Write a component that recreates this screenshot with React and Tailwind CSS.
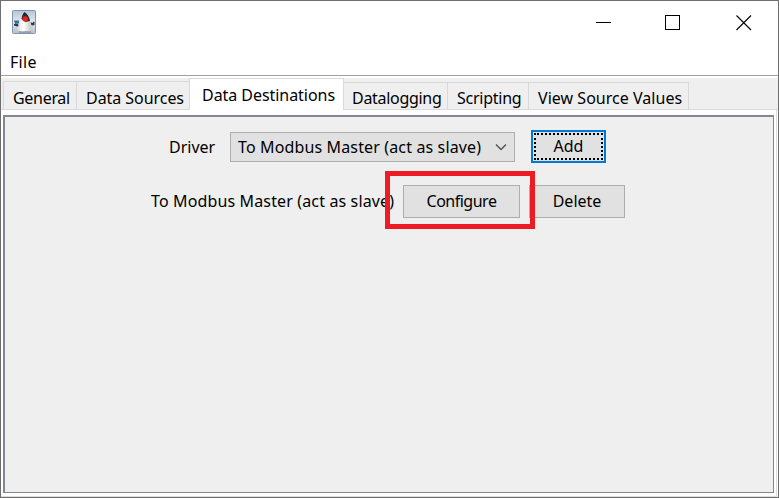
const tabs = [
  { label: 'General', box: 'w-[73px] h-7 border-l pl-[9px] pt-[6px]', text: 'tracking-[-0.3px]' },
  { label: 'Data Sources', box: 'w-[113px] h-7 border-l pl-[9px] pt-[6px]', text: 'tracking-[-0.05px]' },
  { label: 'Data Destinations', box: 'w-[155px] h-8 -mb-px border-x bg-white pl-[12px] pt-[6px]', text: 'tracking-[-0.05px]' },
  { label: 'Datalogging', box: 'w-[103px] h-[27px] pl-[8px] pt-[5px]', text: 'tracking-[-0.3px]' },
  { label: 'Scripting', box: 'w-[81px] h-[27px] border-l pl-[9px] pt-[5px]', text: 'tracking-[-0.25px]' },
  { label: 'View Source Values', box: 'w-[161px] h-[27px] border-x pl-[9px] pt-[5px]', text: 'tracking-[0.03px]' },
];

function DukeIcon() {
  return (
    <svg width="24" height="24" viewBox="0 0 24 24">
      <defs>
        <linearGradient id="sky" x1="0" y1="0" x2="0" y2="1">
          <stop offset="0" stopColor="#b4c4d6" />
          <stop offset="0.5" stopColor="#e3e9ef" />
          <stop offset="1" stopColor="#b4bfcc" />
        </linearGradient>
        <linearGradient id="belly" x1="0" y1="0" x2="1" y2="0">
          <stop offset="0" stopColor="#dedede" />
          <stop offset="0.4" stopColor="#ffffff" />
          <stop offset="1" stopColor="#c4c4c4" />
        </linearGradient>
      </defs>
      <rect x="0.5" y="0.5" width="23" height="23" rx="1" fill="url(#sky)" stroke="#7f97b0" />
      <path d="M2 10.500h5v3l-4 .5z" fill="#39729b" />
      <path d="M2 14h4l1 2-2 .5-3-1z" fill="#35393d" />
      <path d="M18.500 12l2 1 1-1.500 1 .5v3l-2 .5-2-1z" fill="#3a3a3c" />
      <path d="M9 9h8c1 2 1.500 3 2 5 1 3 .5 5 0 7l-2 .8-3-.8-2 .8-4-.3-2-1c0-4 1-8 3-11.500z" fill="url(#belly)" />
      <path d="M12.500 2c2.500 1.500 5 5 5.500 9l-4.500 1-4-3c.5-3 1-5 3-7z" fill="#29292b" />
      <circle cx="13.200" cy="9" r="2.800" fill="#ed1f26" />
      <path d="M7 22h12" stroke="#59616a" strokeWidth="0.7" />
    </svg>
  );
}

function TitleBar() {
  return (
    <div className="flex h-[43px] shrink-0 items-start pl-[11px] pt-[9px]">
      <DukeIcon />
      <svg className="ml-[560px] mt-[4px]" width="160" height="18" viewBox="0 0 160 18" fill="none" stroke="#000" shapeRendering="crispEdges">
        <path d="M0 8.500H15" />
        <rect x="69.500" y="1.500" width="14" height="14" />
        <path d="M140.500 1.500L155 16M155 1.500L140.500 16" shapeRendering="auto" strokeWidth="1.1" />
      </svg>
    </div>
  );
}

export default function App() {
  return (
    <div className="relative flex h-[498px] w-[779px] flex-col overflow-hidden border border-[#6e6e6e] bg-white font-['Noto_Sans','Liberation_Sans',sans-serif] text-[16px] leading-[20px] text-black">
      <TitleBar />
      <div className="h-[31px] shrink-0 pl-[9px] pt-[8px] tracking-[0.3px]">File</div>
      <div className="h-px shrink-0 bg-[#a0a0a0]" />
      <div className="mt-[2px] flex h-8 shrink-0 items-end border-b border-[#d9d9d9] bg-[#efefef] pl-[2px] whitespace-nowrap">
        {tabs.map((t) => (
          <div key={t.label} className={`shrink-0 border-t border-[#d9d9d9] ${t.box}`}>
            <span className={t.text}>{t.label}</span>
          </div>
        ))}
      </div>
      <div className="mr-px flex grow flex-col border-b border-r border-[#dcdcdc] bg-white pb-[3px] pl-[2px] pr-[2px] pt-[5px]">
        <div className="grow border border-l-2 border-t-2 border-[#828790] bg-[#efefef] pt-[13px]">
          <div className="flex h-[34px] items-center whitespace-nowrap pl-[164px]">
            <span className="w-[61px] shrink-0">Driver</span>
            <div className="flex h-[30px] w-[285px] shrink-0 items-center border border-[#adadad] bg-[#e1e1e1] pl-[7px]">
              <span className="w-[257px] tracking-[0.14px]">To Modbus Master (act as slave)</span>
              <svg width="12" height="8" viewBox="0 0 12 8" fill="none" stroke="#505050" strokeWidth="1.300">
                <path d="M1 1.500L6 6.500L11 1.500" />
              </svg>
            </div>
            <button className="-mt-px ml-4 h-[33px] w-[75px] shrink-0 border-2 border-[#0078d7] bg-[#e1e1e1] p-px">
              <span className="flex h-full items-center justify-center border-2 border-dotted border-black pb-px">Add</span>
            </button>
          </div>
          <div className="mt-[20px] flex h-[34px] items-center whitespace-nowrap pl-[146px]">
            <span className="w-[252px] shrink-0 tracking-[0.14px]">To Modbus Master (act as slave)</span>
            <button className="h-[33px] w-[117px] shrink-0 border border-[#adadad] bg-[#e1e1e1] tracking-[-0.5px]">Configure</button>
            <button className="ml-[9px] h-[33px] w-[96px] shrink-0 border border-[#adadad] bg-[#e1e1e1]">Delete</button>
          </div>
        </div>
      </div>
      <div className="absolute left-[384px] top-[170px] h-[58px] w-[150px] border-[5px] border-[#ed1c24]" />
    </div>
  );
}
